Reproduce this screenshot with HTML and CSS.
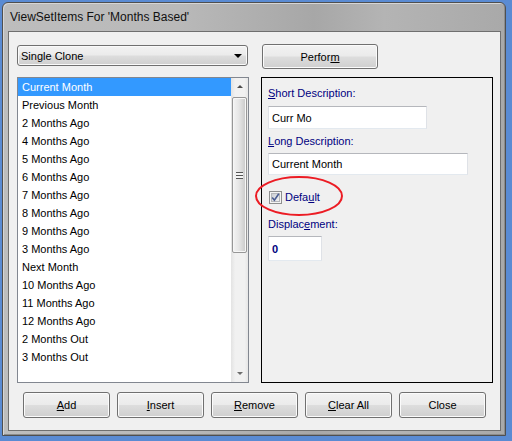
FILE: index.html
```html
<!DOCTYPE html>
<html>
<head>
<meta charset="utf-8">
<link rel="stylesheet" href="styles.css">
</head>
<body>
<div class="window">
  <div class="titlebar"><span class="title">ViewSetItems For 'Months Based'</span></div>
  <div class="client">
    <div class="toprow">
      <div class="combo"><span class="combo-text">Single Clone</span><span class="combo-arrow"></span></div>
      <button class="btn perform">Perfor<u>m</u></button>
    </div>
    <div class="main">
      <div class="listbox">
        <ul class="items">
          <li class="sel">Current Month</li>
          <li>Previous Month</li>
          <li>2 Months Ago</li>
          <li>4 Months Ago</li>
          <li>5 Months Ago</li>
          <li>6 Months Ago</li>
          <li>7 Months Ago</li>
          <li>8 Months Ago</li>
          <li>9 Months Ago</li>
          <li>3 Months Ago</li>
          <li>Next Month</li>
          <li>10 Months Ago</li>
          <li>11 Months Ago</li>
          <li>12 Months Ago</li>
          <li>2 Months Out</li>
          <li>3 Months Out</li>
        </ul>
        <div class="scrollbar">
          <div class="sb-btn"><span class="tri-up"></span></div>
          <div class="sb-track">
            <div class="thumb"><span class="grip"></span></div>
          </div>
          <div class="sb-btn"><span class="tri-down"></span></div>
        </div>
      </div>
      <div class="panel">
        <div class="label l1"><u>S</u>hort Description:</div>
        <div class="field f1">Curr Mo</div>
        <div class="label l2"><u>L</u>ong Description:</div>
        <div class="field f2">Current Month</div>
        <div class="check-row">
          <svg class="checkbox" width="13" height="13" viewBox="0 0 13 13">
            <defs>
              <linearGradient id="cbg" x1="0" y1="0" x2="1" y2="1">
                <stop offset="0" stop-color="#c9ccd2"/>
                <stop offset="1" stop-color="#f4f4f4"/>
              </linearGradient>
            </defs>
            <rect x="0.5" y="0.5" width="12" height="12" fill="#f4f4f4" stroke="#8e8f8f"/>
            <rect x="2.5" y="2.5" width="8" height="8" fill="url(#cbg)" stroke="#b4b6ba"/>
            <path d="M3.2 6.4 L5.4 9.2 L9.8 2.8" fill="none" stroke="#4a5c92" stroke-width="1.6"/>
          </svg>
          <span class="label">Defa<u>u</u>lt</span>
        </div>
        <div class="label l3">Displac<u>e</u>ment:</div>
        <div class="field f3">0</div>
        <svg class="annot" width="92" height="42" viewBox="0 0 92 42">
          <ellipse cx="45" cy="21" rx="43" ry="19" fill="none" stroke="#ec1c24" stroke-width="2"/>
        </svg>
      </div>
    </div>
    <div class="buttons">
      <button class="btn"><u>A</u>dd</button>
      <button class="btn"><u>I</u>nsert</button>
      <button class="btn"><u>R</u>emove</button>
      <button class="btn"><u>C</u>lear All</button>
      <button class="btn">Close</button>
    </div>
  </div>
</div>
</body>
</html>
```

FILE: styles.css
```css
body {
  margin: 0;
  background: #5a8bd3;
  font-family: "Liberation Sans", Arial, sans-serif;
  font-size: 11px;
  color: #000;
}

.window {
  box-sizing: border-box;
  width: 504px;
  height: 434px;
  margin: 2px 0 0 2px;
  border: 1px solid #4f4f4f;
  border-radius: 6px 6px 0 0;
  padding: 0 4px 4px 5px;
  background: linear-gradient(to right, #bdbdbd 0%, #b9b9b9 35%, #a7a7a7 62%, #b4b4b4 76%, #a9a9a9 100%);
  box-shadow: inset 1px 1px 0 #d6d6d6, inset -1px -1px 0 #8c8c8c;
  display: flex;
  flex-direction: column;
}

.titlebar {
  height: 28px;
  display: flex;
  align-items: center;
  padding-left: 2px;
}

.title {
  font-size: 12px;
  color: #111;
}

.client {
  box-sizing: border-box;
  width: 493px;
  height: 400px;
  border: 1px solid #6f6f6f;
  background: #f0f0f0;
  padding: 12px 0 0 8px;
}

.toprow {
  display: flex;
  align-items: flex-start;
  height: 25px;
}

.combo {
  box-sizing: border-box;
  margin-top: 1px;
  width: 231px;
  height: 21px;
  border: 1px solid #707070;
  border-radius: 3px;
  background: linear-gradient(#f2f2f2 0%, #ebebeb 48%, #dddddd 52%, #cfcfcf 100%);
  box-shadow: inset 0 0 0 1px #fafafa;
  display: flex;
  align-items: center;
  justify-content: space-between;
  padding: 0 5px 0 3px;
}

.combo-arrow {
  width: 0;
  height: 0;
  border-left: 4px solid transparent;
  border-right: 4px solid transparent;
  border-top: 4px solid #000;
}

.btn {
  box-sizing: border-box;
  width: 87px;
  height: 26px;
  padding: 0;
  border: 1px solid #707070;
  border-radius: 3px;
  background: linear-gradient(#f2f2f2 0%, #ebebeb 48%, #dddddd 52%, #cfcfcf 100%);
  box-shadow: inset 0 0 0 1px #fbfbfb;
  font-family: "Liberation Sans", Arial, sans-serif;
  font-size: 11px;
  color: #000;
}

.perform {
  margin-left: 14px;
  width: 116px;
  height: 25px;
}

.main {
  display: grid;
  grid-template-columns: 232px 232px;
  column-gap: 12px;
  height: 306px;
  margin-top: 8px;
}

.listbox {
  box-sizing: border-box;
  border: 1px solid #828790;
  background: #fff;
  display: flex;
  height: 306px;
}

.items {
  list-style: none;
  margin: 0;
  padding: 0;
  flex: 1;
}

.items li {
  height: 18px;
  line-height: 18px;
  padding-left: 4px;
  white-space: nowrap;
}

.items li.sel {
  background: #3399ff;
  color: #fff;
}

.scrollbar {
  width: 17px;
  display: flex;
  flex-direction: column;
  background: linear-gradient(to right, #e3e3e3 0%, #f1f1f1 25%, #f1f1f1 80%, #e6e6e6 100%);
}

.sb-btn {
  height: 17px;
  display: flex;
  align-items: center;
  justify-content: center;
}

.tri-up {
  width: 0;
  height: 0;
  border-left: 3px solid transparent;
  border-right: 3px solid transparent;
  border-bottom: 3px solid #4d4d4d;
}

.tri-down {
  width: 0;
  height: 0;
  border-left: 3px solid transparent;
  border-right: 3px solid transparent;
  border-top: 3px solid #6d6d6d;
}

.sb-track {
  flex: 1;
  padding: 2px 1px 0 1px;
}

.thumb {
  box-sizing: border-box;
  height: 156px;
  border: 1px solid #979797;
  border-radius: 2px;
  background: linear-gradient(to right, #f4f4f4 0%, #e6e6e6 45%, #d6d6d6 75%, #c9c9c9 100%);
  box-shadow: inset 0 0 0 1px #f7f7f7;
  display: flex;
  align-items: center;
  justify-content: center;
}

.grip {
  width: 7px;
  height: 7px;
  background: repeating-linear-gradient(#555 0px, #555 1px, #f4f4f4 1px, #f4f4f4 3px);
}

.panel {
  position: relative;
  box-sizing: border-box;
  height: 306px;
  border: 1px solid #000;
  background: #f0f0f0;
  padding: 9px 0 0 6px;
}

.label {
  color: #000080;
  line-height: 13px;
  height: 13px;
}

.field {
  box-sizing: border-box;
  background: #fff;
  border: 1px solid;
  border-color: #b5b7bc #dfe2e7 #e3e9ef #dfe2e7;
  padding-left: 3px;
  display: flex;
  align-items: center;
}

.f1 {
  margin-top: 6px;
  width: 159px;
  height: 23px;
}

.l2 {
  margin-top: 6px;
}

.f2 {
  margin-top: 5px;
  width: 200px;
  height: 22px;
}

.check-row {
  margin-top: 16px;
  display: flex;
  align-items: center;
  height: 13px;
  gap: 3px;
  padding-left: 1px;
}

.l3 {
  margin-top: 14px;
}

.f3 {
  margin-top: 5px;
  width: 54px;
  height: 25px;
  color: #000080;
  font-weight: bold;
}

.annot {
  position: absolute;
  left: -8px;
  top: 97px;
}

.buttons {
  display: flex;
  gap: 7px;
  margin-top: 9px;
  padding-left: 6px;
}
```
